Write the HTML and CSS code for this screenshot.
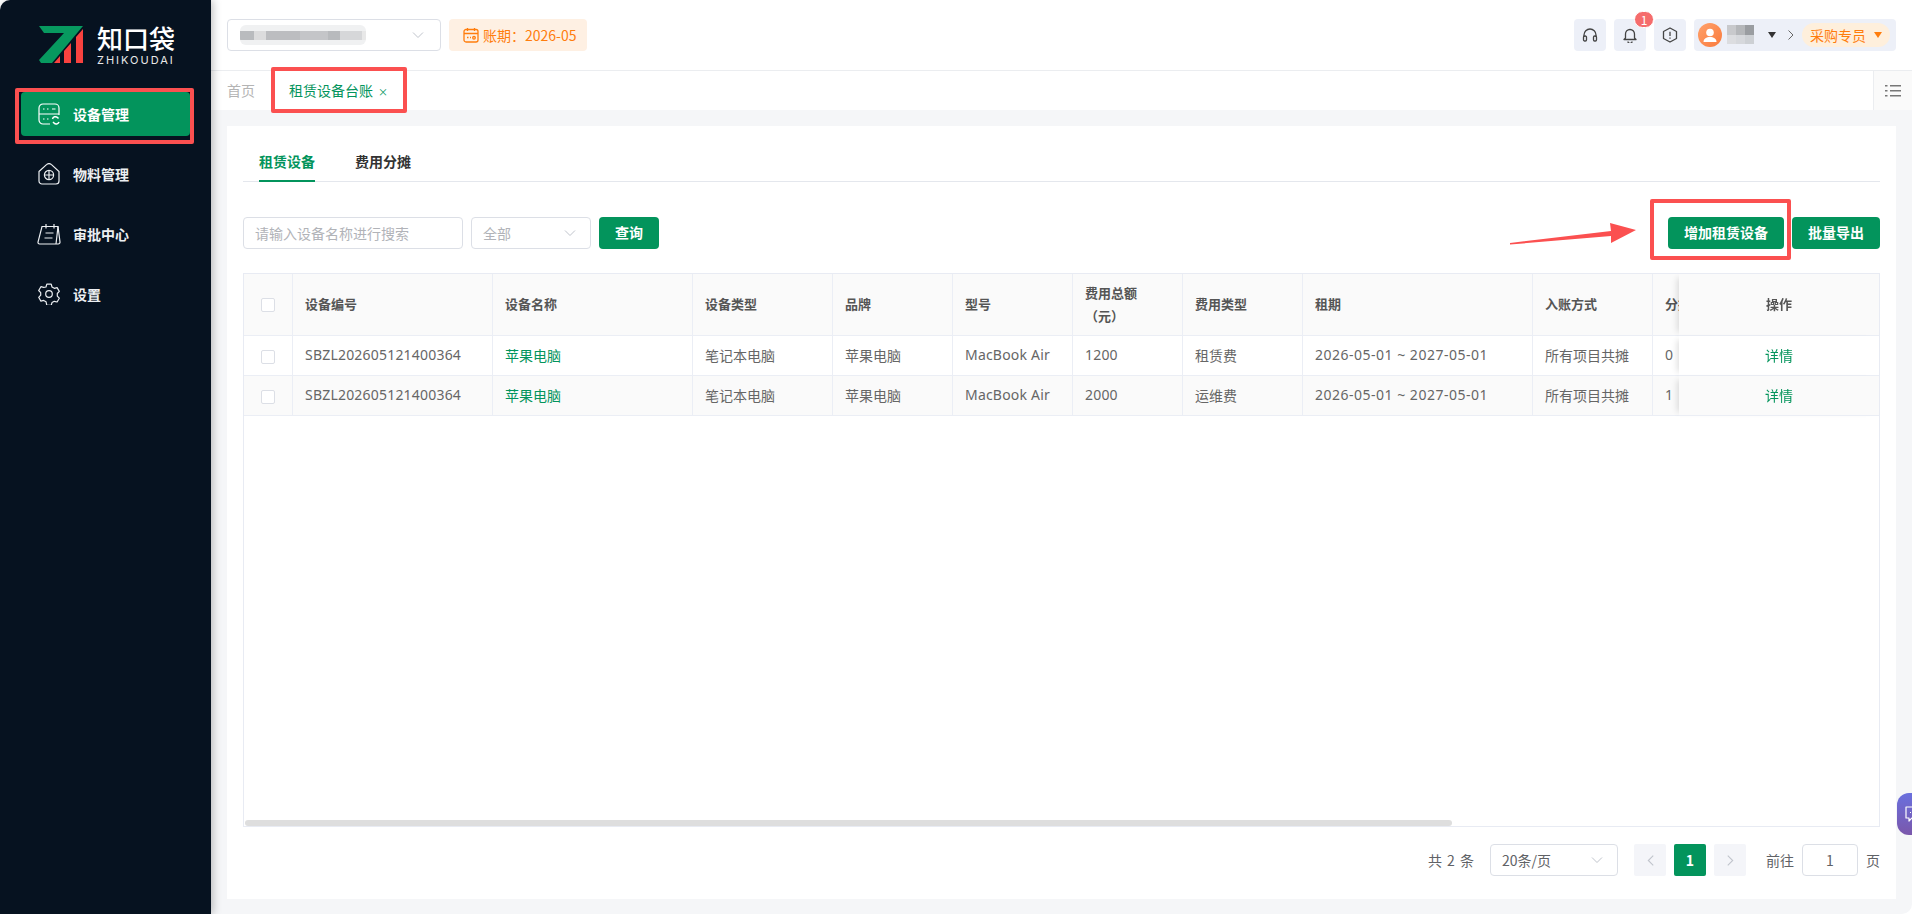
FILE: index.html
```html
<!DOCTYPE html>
<html lang="zh-CN">
<head>
  <meta charset="UTF-8" />
  <meta name="viewport" content="width=device-width, initial-scale=1.0"/>
  <title>租赁设备台账</title>
  <link rel="stylesheet" href="styles.css">
</head>
<body>
<svg class="defs" width="0" height="0">
  <symbol id="chev-down" viewBox="0 0 12 12"><path d="M1 3.5 6 8.5 11 3.5" fill="none" stroke="currentColor" stroke-width="1"/></symbol>
</svg>

<div class="app">
  <aside class="sidebar">
    <div class="logo">
      <svg class="logo-mark" viewBox="0 0 44 38" width="44" height="38">
        <path d="M0 0H44L13 37H2L0 34 25 7H5Z" fill="#07995f"/>
        <path d="M15 37 21 30V37ZM25 37V25L32 17V37ZM37 37V11L44 3V37Z" fill="#f9423f"/>
      </svg>
      <div class="logo-text">
        <div class="logo-cn">知口袋</div>
        <div class="logo-en">ZHIKOUDAI</div>
      </div>
    </div>
    <nav class="menu">
      <div class="menu-item active">
        <svg viewBox="0 0 22 22" width="22" height="22" fill="none" stroke="currentColor" stroke-width="1.2">
          <path d="M12 21H5a4 4 0 0 1-4-4V5a4 4 0 0 1 4-4h12a4 4 0 0 1 4 4v7"/>
          <path d="M1 11h20M5 6h1.5M9 6h1.5M14 6h3.5M5 16h1.5M9 16h1.5"/>
          <path d="M14.5 16a3 3 0 0 1 5-1.5l1 1M21 19a3 3 0 0 1-5 1l-1-1" stroke-width="1.5"/>
        </svg>
        <span>设备管理</span>
      </div>
      <div class="menu-item">
        <svg viewBox="0 0 22 22" width="22" height="22" fill="none" stroke="currentColor" stroke-width="1.2">
          <path d="M1 8.5 8.5 1.6a3.5 3.5 0 0 1 5 0L21 8.5V18a3 3 0 0 1-3 3H4a3 3 0 0 1-3-3Z"/>
          <circle cx="11" cy="12" r="4.6"/>
          <path d="M11 7.4v9.2M6.4 12h9.2"/>
        </svg>
        <span>物料管理</span>
      </div>
      <div class="menu-item">
        <svg viewBox="0 0 24 22" width="24" height="22" fill="none" stroke="currentColor" stroke-width="1.2">
          <path d="M5 3.5h16L23 19a1.8 1.8 0 0 1-1.8 2H2.5A1.5 1.5 0 0 1 1 19.2Z"/>
          <path d="M21 3.5 19 21M9 1v4.500M17 1v4.500M8.500 10h8M7.500 15h8"/>
        </svg>
        <span>审批中心</span>
      </div>
      <div class="menu-item">
        <svg viewBox="0 0 22 22" width="22" height="22" fill="none" stroke="currentColor" stroke-width="1.2">
          <path d="M8.800 1.200h4.400l.8 2.800 2.300 1.300 2.800-.7 2.200 3.800-2 2.100v2.600l2 2.100-2.200 3.800-2.800-.7-2.300 1.300-.8 2.800H8.800L8 18.700l-2.300-1.300-2.800.7L.7 14.300l2-2.100V9.600l-2-2.100 2.200-3.800 2.800.7L8 4Z" stroke-linejoin="round"/>
          <circle cx="11" cy="11" r="3.300"/>
        </svg>
        <span>设置</span>
      </div>
    </nav>
  </aside>

  <main class="main">
    <header class="topbar">
      <div class="top-left">
        <div class="company-select">
          <span class="mosaic-company"></span>
          <svg class="chev" width="12" height="12"><use href="#chev-down"/></svg>
        </div>
        <div class="period-tag">
          <svg viewBox="0 0 16 16" width="16" height="16" fill="none" stroke="currentColor" stroke-width="1.300">
            <rect x="1" y="2.500" width="14" height="12.500" rx="2"/>
            <path d="M1 6.500h14M4.500 1v3M11.500 1v3M4 10.500h1.500M7 10.500h1"/>
            <circle cx="11" cy="10.800" r="1.300"/>
          </svg>
          <span>账期：2026-05</span>
        </div>
      </div>
      <div class="top-right">
        <div class="icon-btn">
          <svg viewBox="0 0 16 16" width="16" height="16" fill="none" stroke="#444" stroke-width="1.300">
            <path d="M2 10V8a6 6 0 0 1 12 0v2"/>
            <rect x="1.500" y="9" width="3" height="5" rx="1.200"/>
            <rect x="11.500" y="9" width="3" height="5" rx="1.200"/>
          </svg>
        </div>
        <div class="icon-btn">
          <svg viewBox="0 0 16 16" width="16" height="16" fill="none" stroke="#444" stroke-width="1.300">
            <path d="M3.500 11V7a4.500 4.500 0 0 1 9 0v4l1.500 1.500H2Z" stroke-linejoin="round"/>
            <path d="M6 14.500a2 2 0 0 0 4 0"/>
          </svg>
          <span class="badge">1</span>
        </div>
        <div class="icon-btn">
          <svg viewBox="0 0 16 16" width="16" height="16" fill="none" stroke="#444" stroke-width="1.300">
            <path d="M8 1 14.500 4.500v7L8 15 1.500 11.500v-7Z" stroke-linejoin="round"/>
            <path d="M8 4.800v4.200M8 10.500v1.200"/>
          </svg>
        </div>
        <div class="user-box">
          <span class="avatar">
            <svg viewBox="0 0 24 24" width="24" height="24" fill="#fff">
              <circle cx="12" cy="9.500" r="3.800"/>
              <path d="M5.500 19c0-3.500 3-5 6.500-5s6.500 1.500 6.500 5Z"/>
            </svg>
          </span>
          <span class="mosaic-user"></span>
          <span class="caret dark"></span>
          <svg class="chev-right" viewBox="0 0 6 10" width="6" height="10"><path d="M.5.500 5 5 .5 9.500" fill="none" stroke="#666"/></svg>
          <div class="role-pill">
            <span>采购专员</span>
            <span class="caret"></span>
          </div>
        </div>
      </div>
    </header>

    <div class="tabbar">
      <div class="tab-home">首页</div>
      <div class="tab-active">租赁设备台账<span class="tab-close">×</span></div>
      <div class="tab-list">
        <svg viewBox="0 0 16 12" width="16" height="12" fill="#777">
          <path d="M0 0h2.500v1.500H0ZM5 0h11v1.500H5ZM0 5h2.500v1.500H0ZM5 5h11v1.500H5ZM0 10h2.500v1.500H0ZM5 10h11v1.500H5Z"/>
        </svg>
      </div>
    </div>

    <div class="content">
      <section class="card">
        <div class="sub-tabs">
          <div class="sub-tab on">租赁设备</div>
          <div class="sub-tab">费用分摊</div>
        </div>

        <div class="filters">
          <div class="field search">请输入设备名称进行搜索</div>
          <div class="field type-select">全部
            <svg class="chev" width="12" height="12"><use href="#chev-down"/></svg>
          </div>
          <button class="btn">查询</button>
          <div class="filter-actions">
            <button class="btn btn-add">增加租赁设备</button>
            <button class="btn btn-export">批量导出</button>
          </div>
        </div>

        <div class="table-wrap">
          <table class="data-table">
            <colgroup>
              <col class="c-check"><col class="c-200"><col class="c-200"><col class="c-type"><col class="c-120"><col class="c-120"><col class="c-fee"><col class="c-120"><col class="c-term"><col class="c-120"><col class="c-share"><col class="c-200">
            </colgroup>
            <thead>
              <tr>
                <th class="center"><span class="checkbox"></span></th>
                <th>设备编号</th>
                <th>设备名称</th>
                <th>设备类型</th>
                <th>品牌</th>
                <th>型号</th>
                <th>费用总额（元）</th>
                <th>费用类型</th>
                <th>租期</th>
                <th>入账方式</th>
                <th>分摊比例</th>
                <th class="fixed center">操作</th>
              </tr>
            </thead>
            <tbody>
              <tr>
                <td class="center"><span class="checkbox"></span></td>
                <td class="latin">SBZL202605121400364</td>
                <td class="link">苹果电脑</td>
                <td>笔记本电脑</td>
                <td>苹果电脑</td>
                <td class="latin">MacBook Air</td>
                <td class="latin">1200</td>
                <td>租赁费</td>
                <td class="latin date">2026-05-01 ~ 2027-05-01</td>
                <td>所有项目共摊</td>
                <td class="latin">0</td>
                <td class="fixed center link">详情</td>
              </tr>
              <tr>
                <td class="center"><span class="checkbox"></span></td>
                <td class="latin">SBZL202605121400364</td>
                <td class="link">苹果电脑</td>
                <td>笔记本电脑</td>
                <td>苹果电脑</td>
                <td class="latin">MacBook Air</td>
                <td class="latin">2000</td>
                <td>运维费</td>
                <td class="latin date">2026-05-01 ~ 2027-05-01</td>
                <td>所有项目共摊</td>
                <td class="latin">1</td>
                <td class="fixed center link">详情</td>
              </tr>
            </tbody>
          </table>
          <div class="scroll-thumb"></div>
        </div>

        <div class="pager">
          <span class="pager-total">共 2 条</span>
          <div class="field page-size">20条/页
            <svg class="chev" width="12" height="12"><use href="#chev-down"/></svg>
          </div>
          <div class="page-btns">
            <span class="page-btn">
              <svg viewBox="0 0 6 10" width="7" height="11"><path d="M5.500.500 1 5l4.500 4.500" fill="none" stroke="#c0c4cc"/></svg>
            </span>
            <span class="page-btn current">1</span>
            <span class="page-btn">
              <svg viewBox="0 0 6 10" width="7" height="11"><path d="M.500.500 5 5 .500 9.500" fill="none" stroke="#c0c4cc"/></svg>
            </span>
          </div>
          <span class="pager-go">前往</span>
          <div class="field page-input">1</div>
          <span>页</span>
        </div>
      </section>
    </div>
  </main>

  <!-- annotations drawn over the screenshot -->
  <div class="mark mark-menu"></div>
  <div class="mark mark-tab"></div>
  <div class="mark mark-add"></div>
  <svg class="mark-arrow" viewBox="0 0 126 22" width="126" height="22">
    <path d="M0 20 101 8 100 0 126 7 101 20 101 13 0 21.500Z" fill="#fb5050"/>
  </svg>

  <div class="chat-float">
    <svg viewBox="0 0 20 20" width="20" height="20" fill="none" stroke="#fff" stroke-width="1.200">
      <path d="M2 3h16v11H8l-3 3v-3H2Z" stroke-linejoin="round"/>
      <path d="M6 8.500h1M10 8.500h1"/>
    </svg>
  </div>
</div>
</body>
</html>
```

FILE: styles.css
```css
* {
  box-sizing: border-box;
}

body {
  margin: 0;
  background-color: #fff;
  font-family: "Noto Sans CJK SC", "Noto Sans", sans-serif;
  font-size: 14px;
  color: #666;
  overflow: hidden;
}

.defs {
  position: absolute;
}

.app {
  display: flex;
  position: relative;
  width: 1912px;
  height: 914px;
  overflow: hidden;
}

/* sidebar */
.sidebar {
  width: 211px;
  flex-shrink: 0;
  background-color: #061220;
  border-top-left-radius: 10px;
  box-shadow: 2px 0 8px rgba(0, 0, 0, 0.25);
  position: relative;
  z-index: 2;
}

.logo {
  display: flex;
  gap: 14px;
  height: 92px;
  padding: 26px 0 0 39px;
}

.logo-cn {
  font-size: 26px;
  font-weight: 500;
  line-height: 24px;
  color: #fff;
}

.logo-en {
  margin-top: 5px;
  font-size: 11px;
  line-height: 11px;
  letter-spacing: 2px;
  color: #e8e8e8;
  font-family: "Inter", sans-serif;
}

.menu {
  display: flex;
  flex-direction: column;
  gap: 16px;
  padding: 0 21px;
}

.menu-item {
  display: flex;
  align-items: center;
  gap: 13px;
  height: 44px;
  padding-left: 17px;
  color: #eceff2;
  font-weight: 700;
  border-radius: 4px;
}

.menu-item svg {
  flex-shrink: 0;
}

.menu-item svg[width="24"] {
  margin-left: -1px;
  margin-right: -1px;
}

.menu-item.active {
  background-color: #03945c;
  color: #fff;
}

/* top bar */
.main {
  flex: 1;
  display: flex;
  flex-direction: column;
  min-width: 0;
}

.topbar {
  display: flex;
  align-items: center;
  justify-content: space-between;
  height: 71px;
  padding: 0 16px 1px;
  border-bottom: 1px solid #ebedf0;
}

.top-left,
.top-right {
  display: flex;
  align-items: center;
  gap: 8px;
}

.company-select {
  display: flex;
  align-items: center;
  justify-content: space-between;
  width: 214px;
  height: 32px;
  padding: 0 16px 0 12px;
  border: 1px solid #dcdfe6;
  border-radius: 4px;
}

.chev {
  color: #c0c4cc;
}

.mosaic-company {
  width: 126px;
  height: 20px;
  border-radius: 6px;
  background-color: #f0f1f2;
  background-image: linear-gradient(90deg, #b9bbbe 0 14px, #dcdcdd 14px 26px, #bcbdc0 26px 60px, #c4c5c8 60px 88px, #b8babd 88px 100px, #d6d7d9 100px 122px, #e8e8e8 122px);
  background-size: 100% 9px;
  background-position: 0 6px;
  background-repeat: no-repeat;
}

.mosaic-user {
  width: 27px;
  height: 19px;
  margin-left: 5px;
  background-image: linear-gradient(90deg, #c8c9cc 0 9px, #b5b7ba 9px 18px, #9a9da1 18px), linear-gradient(90deg, #dcdde0 0 9px, #d6d8dc 9px 18px, #cdd0d4 18px);
  background-size: 100% 10px, 100% 9px;
  background-position: 0 0, 0 10px;
  background-repeat: no-repeat;
}

.period-tag {
  display: flex;
  align-items: center;
  gap: 4px;
  width: 138px;
  height: 32px;
  padding-left: 14px;
  background-color: #fef0e3;
  border-radius: 4px;
  color: #ff7d0d;
}

.icon-btn {
  position: relative;
  display: flex;
  align-items: center;
  justify-content: center;
  width: 32px;
  height: 32px;
  background-color: #edf0f8;
  border-radius: 4px;
}

.badge {
  position: absolute;
  top: -8px;
  left: 20px;
  width: 20px;
  height: 17px;
  line-height: 15px;
  text-align: center;
  font-size: 12px;
  color: #fff;
  background-color: #f56c6c;
  border: 1px solid #fff;
  border-radius: 9px;
}

.user-box {
  display: flex;
  align-items: center;
  width: 202px;
  height: 32px;
  padding: 0 4px;
  background-color: #edf0f8;
  border-radius: 4px;
}

.avatar {
  width: 24px;
  height: 24px;
  border-radius: 50%;
  background: linear-gradient(135deg, #ffa26b, #fa7a3c);
}

.caret {
  width: 0;
  height: 0;
  border-left: 4.5px solid transparent;
  border-right: 4.5px solid transparent;
  border-top: 6px solid #ff7d0d;
}

.caret.dark {
  margin-left: 14px;
  border-top-color: #333;
}

.chev-right {
  margin-left: 12px;
}

.role-pill {
  display: flex;
  align-items: center;
  gap: 8px;
  width: 88px;
  height: 24px;
  margin-left: 8px;
  padding-left: 8px;
  background-color: #feefdc;
  border-radius: 12px;
  color: #ff7d0d;
}

/* tab bar */
.tabbar {
  display: flex;
  align-items: center;
  height: 39px;
  padding-left: 16px;
  background-color: #fff;
}

.tab-home {
  color: #b4b4b4;
  padding-bottom: 2px;
}

.tab-active {
  margin-left: 34px;
  padding-bottom: 2px;
  color: #03945c;
}

.tab-close {
  margin-left: 5px;
  font-size: 10px;
}

.tab-list {
  display: flex;
  align-items: center;
  justify-content: center;
  width: 39px;
  height: 39px;
  margin-left: auto;
  background-color: #fafafa;
  border-left: 1px solid #ebedf0;
}

/* content */
.content {
  flex: 1;
  display: flex;
  min-height: 0;
  padding: 16px 16px 15px;
  background-color: #f5f6f8;
  border-bottom-right-radius: 10px;
}

.card {
  flex: 1;
  display: flex;
  flex-direction: column;
  min-width: 0;
  padding: 16px 16px 23px;
  background-color: #fff;
}

.sub-tabs {
  display: flex;
  height: 40px;
  padding-left: 16px;
  gap: 40px;
  border-bottom: 1px solid #e4e7ed;
}

.sub-tab {
  height: 40px;
  line-height: 38px;
  font-weight: 700;
  color: #333;
}

.sub-tab.on {
  color: #03945c;
  border-bottom: 2px solid #03945c;
}

.filters {
  display: flex;
  align-items: center;
  gap: 8px;
  margin-top: 35px;
}

.filter-actions {
  display: flex;
  gap: 8px;
  margin-left: auto;
}

.field {
  display: flex;
  align-items: center;
  justify-content: space-between;
  height: 32px;
  border: 1px solid #dcdfe6;
  border-radius: 4px;
  color: #b1b3b8;
  background-color: #fff;
}

.search {
  width: 220px;
  padding-left: 11px;
}

.type-select {
  width: 120px;
  padding: 0 14px 0 11px;
}

.btn {
  height: 32px;
  width: 60px;
  padding: 0 0 2px;
  border: none;
  border-radius: 4px;
  background-color: #03945c;
  color: #fff;
  font-family: inherit;
  font-size: 14px;
  font-weight: 700;
}

.btn-add {
  width: 116px;
}

.btn-export {
  width: 88px;
}

/* table */
.table-wrap {
  position: relative;
  flex: 1;
  margin-top: 24px;
  border: 1px solid #e8ebf3;
  overflow: hidden;
  min-height: 0;
}

.data-table {
  width: 2060px;
  table-layout: fixed;
  border-collapse: separate;
  border-spacing: 0;
}

.c-check { width: 49px; }
.c-200 { width: 200px; }
.c-type { width: 140px; }
.c-120 { width: 120px; }
.c-fee { width: 110px; }
.c-term { width: 230px; }
.c-share { width: 451px; }

.data-table th,
.data-table td {
  padding: 0 12px 2px;
  text-align: left;
  border-right: 1px solid #ebeef5;
  border-bottom: 1px solid #ebeef5;
  background-color: #fff;
  white-space: nowrap;
  overflow: hidden;
}

.data-table th {
  height: 62px;
  background-color: #fafafa;
  color: #555;
  font-size: 13px;
  font-weight: 700;
  line-height: 23px;
  white-space: normal;
  text-spacing-trim: space-all;
}

.data-table td {
  height: 40px;
}

.data-table tbody tr:nth-child(2) td {
  background-color: #fafafa;
}

.data-table .center {
  text-align: center;
  padding: 0 0 2px;
}

.data-table .link {
  color: #03945c;
}

.data-table .latin {
  font-family: "Noto Sans", "Noto Sans CJK SC", sans-serif;
  letter-spacing: 0.2px;
}

.data-table .date {
  letter-spacing: 0.5px;
}

.data-table .fixed {
  position: sticky;
  right: 0;
  border-right: none;
  box-shadow: -6px 0 6px -4px rgba(0, 0, 0, 0.12);
}

.checkbox {
  display: inline-block;
  vertical-align: middle;
  width: 14px;
  height: 14px;
  background-color: #fff;
  border: 1px solid #dcdfe6;
  border-radius: 2px;
}

.scroll-thumb {
  position: absolute;
  left: 1px;
  bottom: 0;
  width: 1207px;
  height: 6px;
  background-color: #dedede;
  border-radius: 3px;
}

/* pagination */
.pager {
  display: flex;
  align-items: center;
  justify-content: flex-end;
  height: 32px;
  margin-top: 17px;
  color: #606266;
}

.pager-total {
  word-spacing: 2px;
}

.page-size {
  width: 128px;
  margin-left: 16px;
  padding: 0 14px 0 11px;
  color: #606266;
}

.page-btns {
  display: flex;
  gap: 8px;
  margin-left: 16px;
}

.page-btn {
  display: flex;
  align-items: center;
  justify-content: center;
  width: 32px;
  height: 32px;
  background-color: #f4f5f9;
  border-radius: 2px;
}

.page-btn.current {
  background-color: #03945c;
  color: #fff;
  font-weight: 700;
}

.pager-go {
  margin-left: 20px;
}

.page-input {
  width: 56px;
  margin: 0 8px;
  justify-content: center;
  color: #606266;
}

/* annotations */
.mark {
  position: absolute;
  z-index: 5;
  border: 4px solid #fb5050;
  border-radius: 2px;
}

.mark-menu {
  left: 15px;
  top: 88px;
  width: 179px;
  height: 56px;
}

.mark-tab {
  left: 271px;
  top: 67px;
  width: 136px;
  height: 46px;
}

.mark-add {
  left: 1650px;
  top: 199px;
  width: 141px;
  height: 61px;
}

.mark-arrow {
  position: absolute;
  z-index: 5;
  left: 1510px;
  top: 223px;
}

.chat-float {
  position: absolute;
  z-index: 6;
  left: 1897px;
  top: 793px;
  width: 40px;
  height: 42px;
  padding: 11px 0 0 7px;
  border-radius: 12px;
  background: linear-gradient(180deg, #6a70de, #7a57ab);
}
```
